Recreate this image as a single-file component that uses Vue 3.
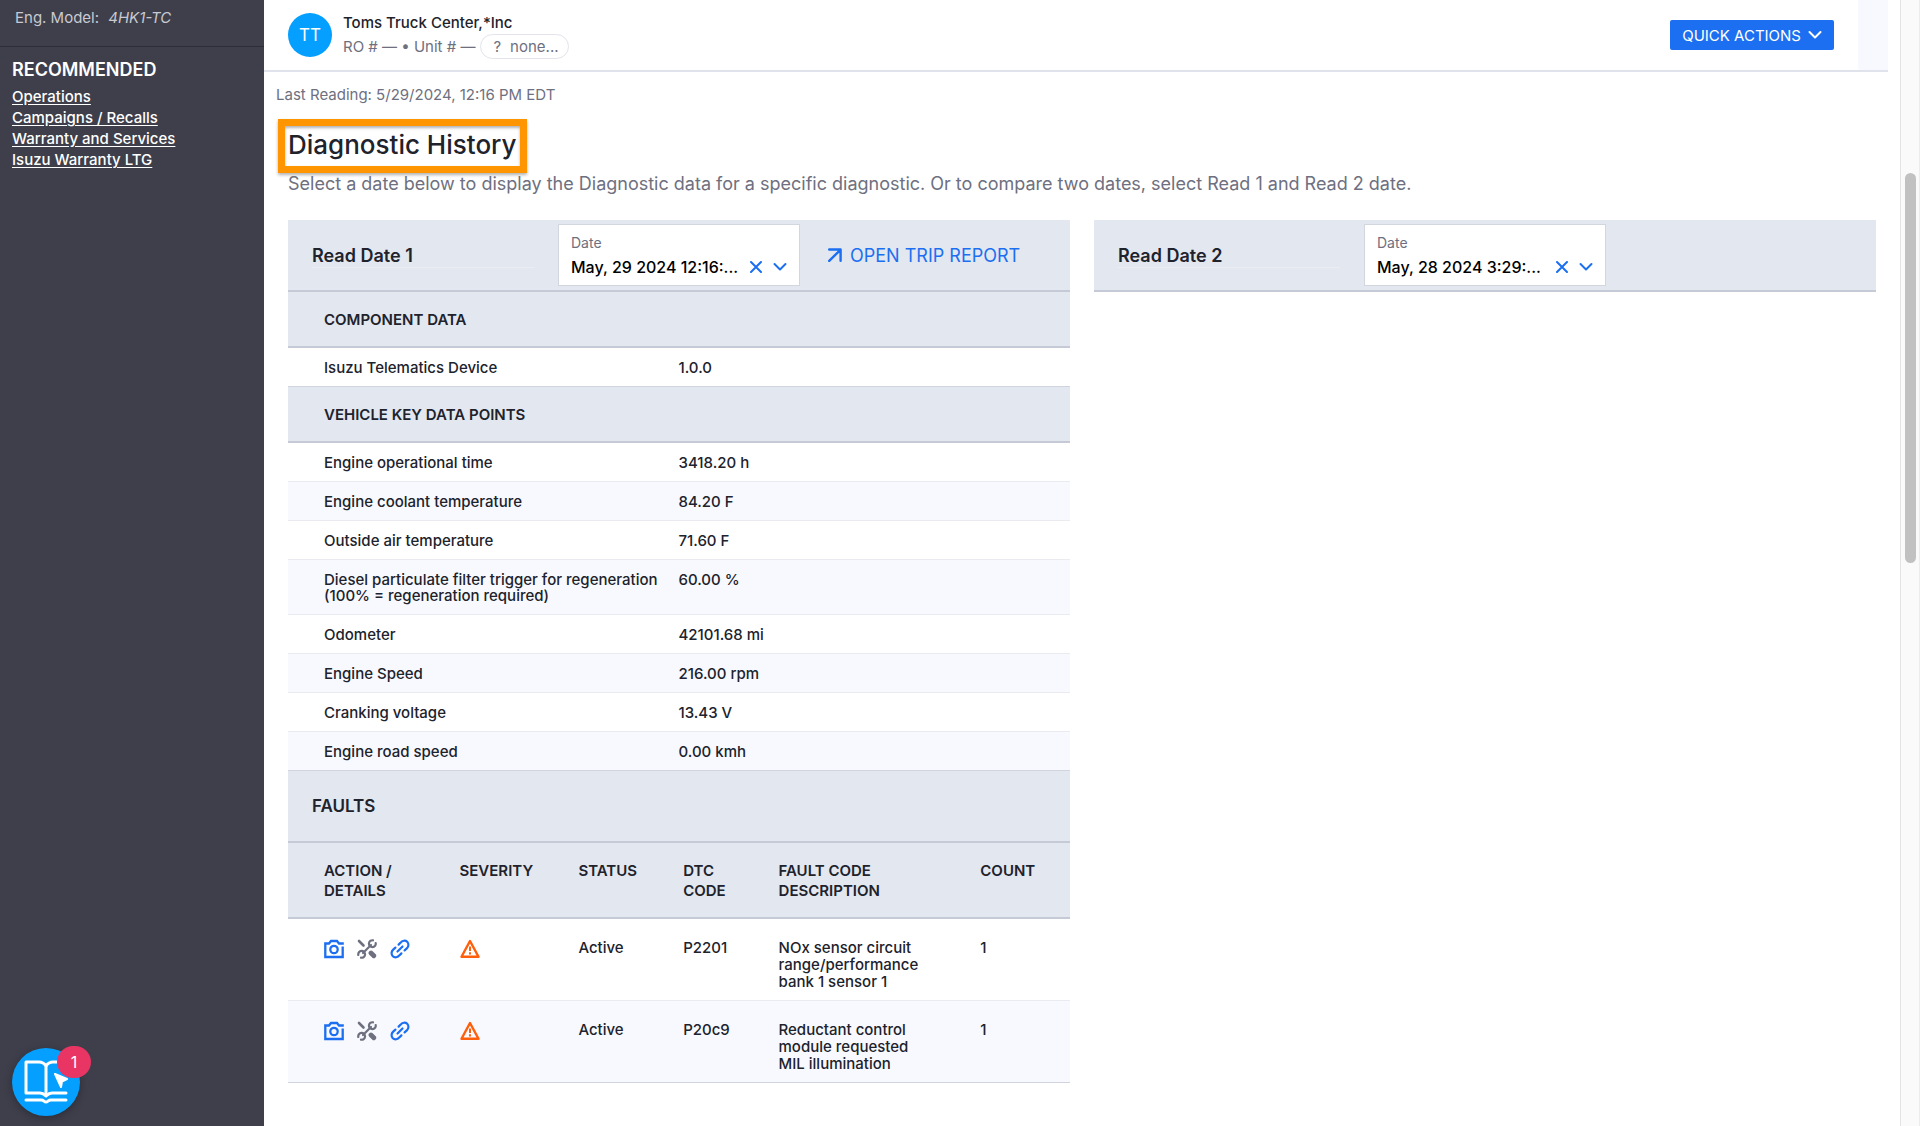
<script setup>
import { ref } from 'vue'

const links = ['Operations', 'Campaigns / Recalls', 'Warranty and Services', 'Isuzu Warranty LTG']

const date1 = ref('May, 29 2024 12:16:...')
const date2 = ref('May, 28 2024 3:29:...')

const sections = [
  {
    title: 'COMPONENT DATA',
    rows: [['Isuzu Telematics Device', '1.0.0']],
  },
  {
    title: 'VEHICLE KEY DATA POINTS',
    rows: [
      ['Engine operational time', '3418.20 h'],
      ['Engine coolant temperature', '84.20 F'],
      ['Outside air temperature', '71.60 F'],
      ['Diesel particulate filter trigger for regeneration (100% = regeneration required)', '60.00 %'],
      ['Odometer', '42101.68 mi'],
      ['Engine Speed', '216.00 rpm'],
      ['Cranking voltage', '13.43 V'],
      ['Engine road speed', '0.00 kmh'],
    ],
  },
]

const faults = [
  { status: 'Active', code: 'P2201', description: 'NOx sensor circuit range/performance bank 1 sensor 1', count: 1 },
  { status: 'Active', code: 'P20c9', description: 'Reductant control module requested MIL illumination', count: 1 },
]
</script>

<template>
  <div class="app">
    <aside class="sidebar">
      <p class="engine">Eng. Model: <em>4HK1-TC</em></p>
      <nav class="recommended">
        <h2>RECOMMENDED</h2>
        <a v-for="link in links" :key="link" href="#">{{ link }}</a>
      </nav>
      <button class="guide" type="button" aria-label="Open guide">
        <svg width="44" height="44" viewBox="0 0 44 44" fill="none" stroke="#fff" stroke-width="3" stroke-linejoin="round" stroke-linecap="round">
          <path d="M22 6 C20 3 18 2 15 2 H2 V33 H16 C19 33 20 34 22 36 C24 34 25 33 28 33 H42" />
          <path d="M22 6 V35 M22 6 C24 3 26 2 29 2 H38" />
          <path d="M2 40 H17 C20 40 20 42 22 42 C24 42 24 40 27 40 H42" />
          <path d="M31 14 L43 19 L38 21.500 L37 27 Z" fill="#fff" stroke-width="2" />
        </svg>
        <span class="badge">1</span>
      </button>
    </aside>

    <main class="main">
      <header class="topbar">
        <div class="topbar-inner">
          <span class="avatar">TT</span>
          <div class="customer">
            <div class="customer-name">Toms Truck Center,*Inc</div>
            <div class="customer-meta">
              <span>RO # — • Unit # —</span>
              <span class="pill"><span class="question">?</span>none...</span>
            </div>
          </div>
          <button class="quick" type="button">
            QUICK ACTIONS
            <svg width="14" height="10" viewBox="0 0 14 10" fill="none" stroke="#fff" stroke-width="2" stroke-linecap="round" stroke-linejoin="round"><path d="M1.500 2 L7 7.500 L12.500 2" /></svg>
          </button>
        </div>
      </header>

      <p class="last-reading">Last Reading: 5/29/2024, 12:16 PM EDT</p>

      <section class="history">
        <h1>Diagnostic History</h1>
        <p class="intro">Select a date below to display the Diagnostic data for a specific diagnostic. Or to compare two dates, select Read 1 and Read 2 date.</p>

        <div class="reads">
          <div class="read">
            <div class="read-head">
              <h3>Read Date 1</h3>
              <div class="date-box">
                <label for="date1">Date</label>
                <div class="date-row">
                  <select id="date1" v-model="date1"><option>May, 29 2024 12:16:...</option></select>
                  <button type="button" aria-label="Clear date 1">
                    <svg width="12" height="12" viewBox="0 0 12 12" fill="none" stroke="#1b6ff0" stroke-width="2" stroke-linecap="round"><path d="M1 1 L11 11 M11 1 L1 11" /></svg>
                  </button>
                  <svg width="14" height="10" viewBox="0 0 14 10" fill="none" stroke="#1b6ff0" stroke-width="2" stroke-linecap="round" stroke-linejoin="round"><path d="M1.500 2 L7 7.500 L12.500 2" /></svg>
                </div>
              </div>
              <a class="trip" href="#">
                <svg width="14" height="14" viewBox="0 0 14 14" fill="none" stroke="#1b6ff0" stroke-width="2.400" stroke-linecap="round" stroke-linejoin="round"><path d="M1.200 1.500 H12.600 V12.800 M12.500 1.800 L1.200 12.800" /></svg>
                OPEN TRIP REPORT
              </a>
            </div>

            <table v-for="section in sections" :key="section.title" class="data">
              <colgroup><col class="c-name" /><col /></colgroup>
              <thead>
                <tr><th colspan="2">{{ section.title }}</th></tr>
              </thead>
              <tbody>
                <tr v-for="row in section.rows" :key="row[0]">
                  <td>{{ row[0] }}</td>
                  <td>{{ row[1] }}</td>
                </tr>
              </tbody>
            </table>

            <h2 class="faults-title">FAULTS</h2>
            <table class="faults">
              <colgroup>
                <col class="c-action" /><col class="c-severity" /><col class="c-status" /><col class="c-code" /><col class="c-desc" /><col />
              </colgroup>
              <thead>
                <tr>
                  <th>ACTION /<br />DETAILS</th>
                  <th>SEVERITY</th>
                  <th>STATUS</th>
                  <th>DTC<br />CODE</th>
                  <th>FAULT CODE<br />DESCRIPTION</th>
                  <th>COUNT</th>
                </tr>
              </thead>
              <tbody>
                <tr v-for="fault in faults" :key="fault.code">
                  <td>
                    <div class="actions">
                      <button type="button" aria-label="Snapshot">
                        <svg width="20" height="20" viewBox="0 0 20 20" fill="none" stroke="#1b6ff0" stroke-width="2.300"><path d="M18.700 7.500 V18 H1.300 V4.500 H5 L7 2 H13 L15 4.500 H19.800" /><circle cx="10" cy="10.500" r="3.700" /></svg>
                      </button>
                      <button type="button" aria-label="Repair">
                        <svg width="20" height="20" viewBox="0 0 20 20" fill="none" stroke="#6e7080" stroke-linecap="round">
                          <path d="M2 2 L6.500 6.500" stroke-width="2.600" />
                          <path d="M14 14 L16.800 16.800" stroke-width="4.800" />
                          <path d="M6 14 L14 6" stroke-width="2.200" />
                          <path d="M16 1.300 A3.400 3.400 0 1 0 18.700 4" stroke-width="2.200" />
                          <path d="M1.300 16 A3.400 3.400 0 1 1 4 18.700" stroke-width="2.200" />
                        </svg>
                      </button>
                      <button type="button" aria-label="Link">
                        <svg width="20" height="20" viewBox="0 0 20 20" fill="none" stroke="#1b6ff0" stroke-width="2.200" stroke-linecap="round">
                          <path d="M7.500 12.500 L12.500 7.500" />
                          <path d="M8.600 5.600 L10.400 3.800 C12.200 1.400 15.400 1 17.200 2.800 C19 4.600 18.800 7.600 16.800 9.400 L14.600 11.400" />
                          <path d="M11.400 14.400 L9.600 16.200 C7.800 18.600 4.600 19 2.800 17.200 C1 15.400 1.200 12.400 3.200 10.600 L5.400 8.600" />
                        </svg>
                      </button>
                    </div>
                  </td>
                  <td>
                    <svg class="warn" role="img" aria-label="Warning" width="20" height="20" viewBox="0 0 20 20" fill="none" stroke="#ff5e0a" stroke-width="2.400" stroke-linejoin="round"><path d="M10 2 L18.500 17.800 H1.500 Z" /><path d="M10 7.500 V12 M10 13.300 V15.500" stroke-width="2" /></svg>
                  </td>
                  <td>{{ fault.status }}</td>
                  <td>{{ fault.code }}</td>
                  <td class="description">{{ fault.description }}</td>
                  <td>{{ fault.count }}</td>
                </tr>
              </tbody>
            </table>
          </div>

          <div class="read">
            <div class="read-head">
              <h3>Read Date 2</h3>
              <div class="date-box">
                <label for="date2">Date</label>
                <div class="date-row">
                  <select id="date2" v-model="date2"><option>May, 28 2024 3:29:...</option></select>
                  <button type="button" aria-label="Clear date 2">
                    <svg width="12" height="12" viewBox="0 0 12 12" fill="none" stroke="#1b6ff0" stroke-width="2" stroke-linecap="round"><path d="M1 1 L11 11 M11 1 L1 11" /></svg>
                  </button>
                  <svg width="14" height="10" viewBox="0 0 14 10" fill="none" stroke="#1b6ff0" stroke-width="2" stroke-linecap="round" stroke-linejoin="round"><path d="M1.500 2 L7 7.500 L12.500 2" /></svg>
                </div>
              </div>
            </div>
          </div>
        </div>
      </section>
    </main>

    <div class="scroll-track" aria-hidden="true"><div class="scroll-thumb"></div></div>
  </div>
</template>

<style>
body {
  margin: 0;
  background: #fff;
}
</style>

<style scoped>
.app {
  display: flex;
  min-height: 100vh;
  font-family: Inter, "Open Sans", sans-serif;
  font-size: 15px;
  color: #20222c;
}
h1, h2, h3, p {
  margin: 0;
}
button {
  font-family: inherit;
  border: 0;
  padding: 0;
  background: none;
  cursor: pointer;
}
svg {
  display: block;
}

/* Sidebar */
.sidebar {
  display: flex;
  flex-direction: column;
  flex: 0 0 264px;
  box-sizing: border-box;
  background: #3e3f4b;
  color: #fff;
}
.engine {
  padding: 8px 15px 18px;
  line-height: 20px;
  color: #c9cad1;
  border-bottom: 1px solid #2c2d37;
}
.engine em {
  margin-left: 5px;
}
.recommended {
  display: flex;
  flex-direction: column;
  align-items: flex-start;
  padding: 13px 12px;
}
.recommended h2 {
  font-size: 18px;
  line-height: 20px;
  font-weight: 600;
  margin-bottom: 6px;
}
.recommended a {
  color: #fff;
  line-height: 21px;
  font-weight: 500;
  text-underline-offset: 2px;
}
.guide {
  position: relative;
  display: flex;
  align-items: center;
  justify-content: center;
  width: 68px;
  height: 68px;
  margin: auto 0 10px 12px;
  border-radius: 50%;
  background: #05a0ff;
  box-shadow: 0 2px 8px rgba(0, 0, 0, 0.3);
}
.badge {
  position: absolute;
  top: -2px;
  right: -11px;
  width: 34px;
  height: 32px;
  border-radius: 16px;
  background: #e83564;
  color: #fff;
  font-size: 16px;
  line-height: 32px;
  text-align: center;
}

/* Top bar */
.main {
  flex: 1;
  min-width: 0;
}
.topbar {
  margin-right: 12px;
  background: #f7f9fe;
  border-bottom: 2px solid #e0e3eb;
}
.topbar-inner {
  display: flex;
  align-items: center;
  height: 70px;
  margin-right: 30px;
  padding: 0 24px;
  background: #fff;
}
.avatar {
  width: 44px;
  height: 44px;
  border-radius: 50%;
  background: #05a0ff;
  color: #fff;
  font-size: 17px;
  line-height: 44px;
  text-align: center;
}
.customer {
  flex: 1;
  margin-left: 11px;
}
.customer-name {
  font-weight: 500;
  line-height: 22px;
}
.customer-meta {
  display: flex;
  align-items: center;
  gap: 5px;
  color: #6e7080;
}
.pill {
  display: flex;
  align-items: center;
  box-sizing: border-box;
  height: 25px;
  padding: 0 9px 0 12px;
  border: 1px solid #e2e4ea;
  border-radius: 13px;
}
.question {
  margin-right: 9px;
}
.quick {
  display: flex;
  align-items: center;
  gap: 7px;
  height: 30px;
  padding: 0 12px;
  border-radius: 2px;
  background: #1b6ff0;
  color: #fff;
  font-size: 15px;
}

/* Heading area */
.last-reading {
  padding: 13px 12px 0;
  line-height: 20px;
  color: #6e7080;
}
.history {
  padding: 14px 24px 0;
}
h1 {
  width: fit-content;
  margin-left: -10px;
  padding: 0 3px 2px 3px;
  border: 7px solid #ff9500;
  box-shadow: 0 2px 3px rgba(0, 0, 0, 0.3), inset 0 2px 3px rgba(0, 0, 0, 0.3);
  font-size: 26px;
  line-height: 38px;
  font-weight: 500;
}
.intro {
  font-size: 18px;
  line-height: 22px;
  color: #6e7080;
}
.reads {
  display: grid;
  grid-template-columns: 1fr 1fr;
  gap: 24px;
  align-items: start;
  margin-top: 25px;
}

/* Read header */
.read-head {
  display: flex;
  align-items: center;
  height: 70px;
  padding-left: 24px;
  background: #e3e7f0;
  border-bottom: 2px solid #c6cad6;
}
h3 {
  flex: 0 0 222px;
  box-sizing: border-box;
  padding-top: 2px;
  border-bottom: 1px solid #ebedf2;
  font-size: 18px;
  line-height: 22px;
  font-weight: 600;
}
.date-box {
  flex: 0 0 242px;
  box-sizing: border-box;
  height: 62px;
  margin-left: 24px;
  padding: 8px 12px;
  background: #fff;
  border: 1px solid #d2d6df;
}
.date-box label {
  display: block;
  font-size: 14px;
  line-height: 20px;
  color: #6e7080;
}
.date-row {
  display: flex;
  align-items: center;
  gap: 11px;
  height: 28px;
}
select {
  flex: 1;
  min-width: 0;
  padding: 0;
  border: 0;
  appearance: none;
  background: none;
  font-family: inherit;
  font-size: 16px;
  font-weight: 500;
  color: #000;
}
.trip {
  display: flex;
  align-items: center;
  gap: 8px;
  margin-left: 28px;
  font-size: 18px;
  color: #1b6ff0;
  text-decoration: none;
}

/* Tables */
table {
  width: 100%;
  table-layout: fixed;
  border-collapse: separate;
  border-spacing: 0;
}
th, td {
  box-sizing: border-box;
  padding-left: 12px;
  padding-right: 0;
  text-align: left;
  vertical-align: top;
}
th:first-child, td:first-child {
  padding-left: 36px;
}
th {
  background: #e3e7f0;
  border-bottom: 2px solid #c6cad6;
  font-weight: 600;
  line-height: 20px;
}
td {
  font-weight: 500;
}
tbody tr:nth-child(even) {
  background: #f7f9fe;
}
.data th {
  padding-top: 18px;
  padding-bottom: 16px;
}
.data td {
  padding-top: 12px;
  padding-bottom: 10px;
  line-height: 16px;
  border-bottom: 1px solid #e9ebf1;
}
.data tr:last-child td {
  border-bottom-color: #d0d4de;
}
.c-name { width: 48.4%; }
.faults-title {
  padding: 24px;
  background: #e3e7f0;
  border-bottom: 2px solid #c6cad6;
  font-size: 17px;
  line-height: 22px;
  font-weight: 600;
}
.faults th {
  padding-top: 18px;
  padding-bottom: 16px;
}
.faults td {
  padding-top: 20px;
  padding-bottom: 10px;
  line-height: 17px;
  border-bottom: 1px solid #e9ebf1;
}
.faults tr:last-child td {
  border-bottom-color: #d0d4de;
}
.faults td.description {
  padding-right: 44px;
}
.c-action { width: 20.4%; }
.c-severity { width: 15.2%; }
.c-status { width: 13.4%; }
.c-code { width: 12.2%; }
.c-desc { width: 25.8%; }
.actions {
  display: flex;
  gap: 13px;
}

/* Scrollbar */
.scroll-track {
  flex: 0 0 20px;
  box-sizing: border-box;
  padding: 173px 3px 0 4px;
  background: #fafafa;
  border-left: 1px solid #e3e3e3;
  border-right: 1px solid #ececec;
}
.scroll-thumb {
  height: 390px;
  border-radius: 6px;
  background: #c1c1c1;
}
</style>
